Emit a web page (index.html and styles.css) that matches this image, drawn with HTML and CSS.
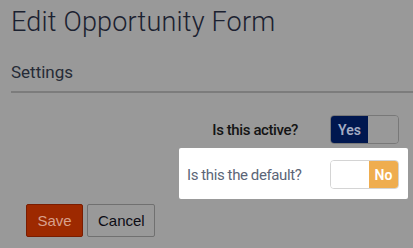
FILE: index.html
```html
<!DOCTYPE html>
<html>
<head>
<meta charset="utf-8">
<link rel="stylesheet" href="styles.css">
</head>
<body>
<div class="page">
  <h1 class="title">Edit Opportunity Form</h1>
  <h2 class="section">Settings</h2>
  <div class="fields">
    <div class="row">
      <span class="label label-dim">Is this active?</span>
      <div class="toggle toggle-dim">
        <span class="half on-navy">Yes</span>
        <span class="half off-dim"></span>
      </div>
    </div>
    <div class="row spotlight">
      <span class="label label-lit">Is this the default?</span>
      <div class="toggle toggle-lit">
        <span class="half off-lit"></span>
        <span class="half on-orange">No</span>
      </div>
    </div>
  </div>
  <div class="actions">
    <button class="btn btn-save">Save</button>
    <button class="btn btn-cancel">Cancel</button>
  </div>
</div>
</body>
</html>
```
FILE: styles.css
```css
html, body {
  margin: 0;
  padding: 0;
  background: #999999;
  font-family: Roboto, "Liberation Sans", sans-serif;
}
.page {
  padding: 6px 0 0 11px;
  width: 402px;
}
.title {
  margin: 0;
  font-weight: 300;
  font-size: 27px;
  line-height: 32px;
  color: #1b2130;
  letter-spacing: 0.2px;
}
.section {
  margin: 22px 0 0;
  font-weight: 400;
  font-size: 17px;
  line-height: 24px;
  color: #262b36;
  padding-bottom: 7px;
  border-bottom: 2px solid #7c7c7c;
}
.fields {
  display: flex;
  flex-direction: column;
  align-items: flex-end;
  padding-right: 14px;
  margin-top: 22px;
}
.row {
  display: flex;
  align-items: center;
  justify-content: flex-end;
  gap: 32px;
}
.spotlight {
  margin-top: 4px;
  margin-right: -9px;
  width: 212px;
  padding: 12px 9px 10px 8px;
  background: #ffffff;
  border-radius: 2px;
  gap: 8px;
}
.label {
  font-size: 15px;
  letter-spacing: -0.4px;
  white-space: nowrap;
}
.label-dim {
  color: #141414;
  font-weight: 500;
}
.label-lit {
  color: #5b6577;
  font-weight: 400;
  flex: 1;
  text-align: left;
}
.toggle {
  flex: 0 0 auto;
  display: flex;
  width: 69px;
  height: 29px;
  border-radius: 4px;
  overflow: hidden;
  box-sizing: border-box;
}
.toggle-dim {
  border: 1px solid #787878;
}
.toggle-lit {
  border: 1px solid #d4d4d4;
}
.half {
  flex: 1;
  display: flex;
  align-items: center;
  justify-content: center;
  font-size: 14px;
  font-weight: 600;
}
.on-navy {
  flex: 0 0 37px;
  background: #00174f;
  color: #a3abc2;
}
.off-dim {
  background: #999999;
}
.off-lit {
  background: #ffffff;
}
.on-orange {
  flex: 0 0 29px;
  background: #efad4f;
  color: #ffffff;
}
.actions {
  display: flex;
  gap: 4px;
  margin-top: 5px;
  padding-left: 15px;
}
.btn {
  font-family: "Liberation Sans", Arial, sans-serif;
  font-size: 15px;
  height: 33px;
  border-radius: 2px;
  padding: 0 10px;
  cursor: pointer;
}
.btn-save {
  background: #9d2900;
  border: 1px solid #7a1c00;
  color: #d8a08c;
  width: 57px;
}
.btn-cancel {
  background: #999999;
  border: 1px solid #707070;
  color: #0c0c14;
  width: 68px;
}
```
